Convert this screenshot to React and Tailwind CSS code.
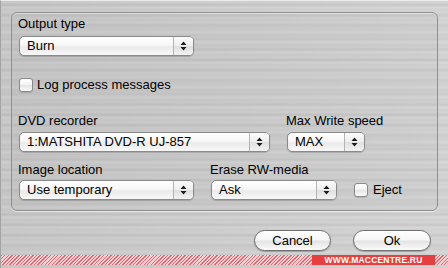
import { useState } from "react";

const Arrows = () => (
  <svg width="7" height="12" viewBox="0 0 7 12">
    <path d="M3.5 1.5 L6.5 5 H0.5 Z M3.5 10.5 L6.5 7 H0.5 Z" fill="#1a1a1a" />
  </svg>
);

const Popup = ({ value, className }) => (
  <div
    className={`flex h-[20px] items-stretch rounded-[5px] border border-[#8a8a8a] bg-[linear-gradient(#ffffff,#f7f7f7_45%,#ebebeb_55%,#f8f8f8)] shadow-[0_1px_1px_rgba(0,0,0,0.18)] ${className}`}
  >
    <span className="flex-1 truncate pl-[7px] text-[13px] leading-[18px] text-black">{value}</span>
    <span className="flex w-[20px] items-center justify-center rounded-r-[4px] border-l border-[#b4b4b4] bg-[linear-gradient(#fbfbfb,#eeeeee_50%,#e0e0e0_51%,#f2f2f2)]">
      <Arrows />
    </span>
  </div>
);

const Checkbox = ({ label, checked, onChange, gap }) => (
  <label className={`flex h-[16px] cursor-default items-center ${gap}`}>
    <span
      onClick={onChange}
      className="flex h-[14px] w-[14px] items-center justify-center rounded-[3px] border border-[#8a8a8a] bg-[linear-gradient(#ffffff,#f2f2f2_50%,#e4e4e4_51%,#fafafa)] shadow-[0_1px_1px_rgba(0,0,0,0.15)] text-[10px] leading-none"
    >
      {checked ? "✓" : ""}
    </span>
    <span className="text-[13px] leading-[16px] text-black">{label}</span>
  </label>
);

const Button = ({ children, className }) => (
  <button
    className={`h-[21px] rounded-full border border-[#6f6f6f] bg-[linear-gradient(#ffffff,#f6f6f6_45%,#e4e4e4_55%,#fbfbfb)] text-[13px] leading-[19px] text-black shadow-[0_1px_1px_rgba(0,0,0,0.25)] ${className}`}
  >
    {children}
  </button>
);

export default function App() {
  const [logMessages, setLogMessages] = useState(false);
  const [eject, setEject] = useState(false);

  return (
    <div className="flex h-[268px] w-[448px] flex-col overflow-hidden border-l border-t border-l-[#a3a3a3] border-t-[#ececec] bg-[#cfcfcf] bg-[linear-gradient(90deg,rgba(0,0,0,0.04),rgba(255,255,255,0.07)),repeating-linear-gradient(180deg,rgba(255,255,255,0)_0px,rgba(255,255,255,0.12)_2px,rgba(0,0,0,0.02)_3px,rgba(255,255,255,0)_5px),repeating-linear-gradient(180deg,rgba(0,0,0,0)_0px,rgba(0,0,0,0.04)_4px,rgba(255,255,255,0.06)_7px,rgba(0,0,0,0)_11px)] font-['Liberation_Sans',Arial,sans-serif]">
      <section className="mx-[10px] mt-[11px] h-[199px] rounded-[6px] border border-[#8f8f8f] bg-black/[0.015] pl-[6px] pt-[3px] shadow-[0_1px_0_rgba(255,255,255,0.55),inset_0_1px_0_rgba(255,255,255,0.45)]">
        <p className="text-[13px] leading-[16px] text-black">Output type</p>
        <Popup value="Burn" className="ml-[1px] mt-[4px] w-[175px]" />

        <div className="ml-[1px] mt-[21px]">
          <Checkbox
            label="Log process messages"
            gap="gap-[4px]"
            checked={logMessages}
            onChange={() => setLogMessages(!logMessages)}
          />
        </div>

        <div className="mt-[20px] flex">
          <div className="w-[268px]">
            <p className="text-[13px] leading-[16px] text-black">DVD recorder</p>
            <Popup value="1:MATSHITA DVD-R UJ-857" className="ml-[1px] mt-[3px] w-[251px]" />
          </div>
          <div>
            <p className="text-[13px] leading-[16px] text-black">Max Write speed</p>
            <Popup value="MAX" className="ml-[1px] mt-[3px] w-[78px]" />
          </div>
        </div>

        <div className="mt-[10px] flex items-end">
          <div className="w-[192px]">
            <p className="text-[13px] leading-[16px] text-black">Image location</p>
            <Popup value="Use temporary" className="ml-[1px] mt-[2px] w-[175px]" />
          </div>
          <div>
            <p className="text-[13px] leading-[16px] text-black">Erase RW-media</p>
            <Popup value="Ask" className="ml-[1px] mt-[2px] w-[126px]" />
          </div>
          <div className="mb-[2px] ml-[17px]">
            <Checkbox label="Eject" gap="gap-[5px]" checked={eject} onChange={() => setEject(!eject)} />
          </div>
        </div>
      </section>

      <div className="mr-[17px] mt-[19px] flex justify-end gap-[22px]">
        <Button className="w-[77px]">Cancel</Button>
        <Button className="w-[78px]">Ok</Button>
      </div>

      <div className="mt-[4px] flex h-[10px] bg-[repeating-linear-gradient(135deg,#e06a74_0px,#e06a74_1px,#f3cfd2_1px,#f3cfd2_2.5px)]">
        <div className="ml-[311px] flex w-[123px] items-center justify-center bg-[#e63f3f] text-[8.5px] font-bold leading-[10px] tracking-[0.2px] text-white">
          WWW.MACCENTRE.RU
        </div>
      </div>
    </div>
  );
}
